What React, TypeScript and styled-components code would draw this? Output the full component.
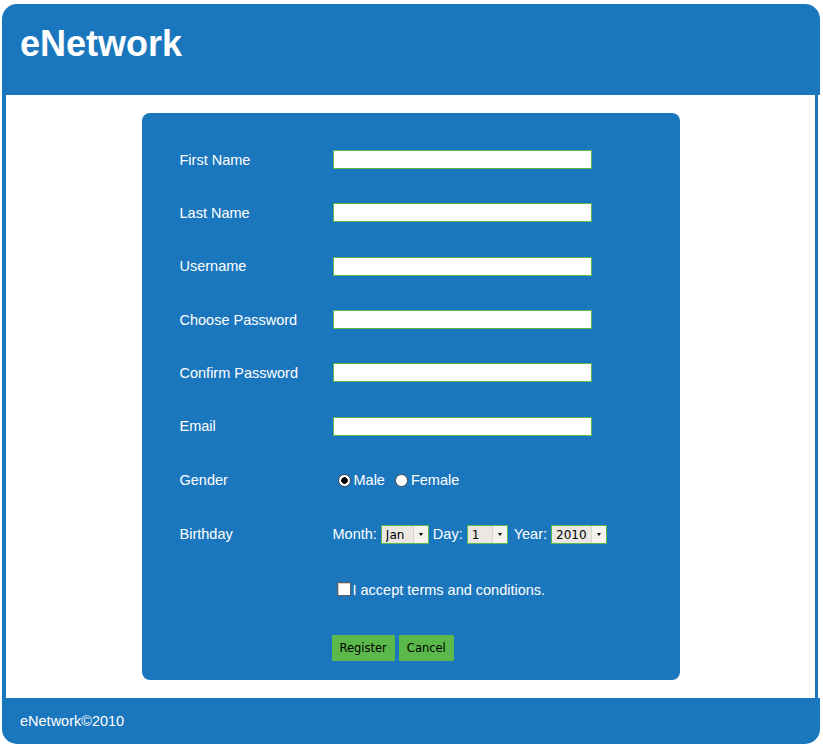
import styled, { createGlobalStyle } from 'styled-components'
import { useState } from 'react'

const BLUE = '#1b77bd'
const GREEN = '#5ab94a'

const GlobalStyle = createGlobalStyle`
	html, body {
		margin: 0;
		padding: 0;
		background: #ffffff;
	}
	body {
		font-family: "Liberation Sans", Arial, sans-serif;
	}
`

const months = ['Jan', 'Feb', 'Mar', 'Apr', 'May', 'Jun', 'Jul', 'Aug', 'Sep', 'Oct', 'Nov', 'Dec']
const days = Array.from({ length: 31 }, (_, i) => String(i + 1))
const years = Array.from({ length: 111 }, (_, i) => String(2010 - i))

const textRows = [
	{ label: 'First Name', type: 'text', height: 53 },
	{ label: 'Last Name', type: 'text', height: 53 },
	{ label: 'Username', type: 'text', height: 54 },
	{ label: 'Choose Password', type: 'password', height: 53 },
	{ label: 'Confirm Password', type: 'password', height: 53 },
	{ label: 'Email', type: 'text', height: 54 },
]

const DropDown = ({ value, options, width, onChange }: { value: string, options: string[], width: number, onChange: (v: string) => void }) => (
	<SelectWrap $width={width}>
		<Select value={value} onChange={event => onChange(event.target.value)}>
			{options.map(option => <option key={option}>{option}</option>)}
		</Select>
		<Arrow />
	</SelectWrap>
)

export default function App() {
	const [gender, setGender] = useState('male')
	const [month, setMonth] = useState('Jan')
	const [day, setDay] = useState('1')
	const [year, setYear] = useState('2010')
	const [accepted, setAccepted] = useState(false)

	return (
		<Page>
			<GlobalStyle />
			<Header>
				<Title>{'eNetwork'}</Title>
			</Header>
			<Content>
				<FormPanel>
					{textRows.map(row => (
						<Row key={row.label} $height={row.height}>
							<Label>{row.label}</Label>
							<TextInput type={row.type} />
						</Row>
					))}
					<Row $height={54}>
						<Label>{'Gender'}</Label>
						<Inline>
							<Radio type='radio' name='gender' checked={gender === 'male'} onChange={() => setGender('male')} />
							<span>{'Male'}</span>
							<Radio type='radio' name='gender' $spaced checked={gender === 'female'} onChange={() => setGender('female')} />
							<span>{'Female'}</span>
						</Inline>
					</Row>
					<Row $height={54}>
						<Label>{'Birthday'}</Label>
						<Inline $gap={4}>
							<span>{'Month:'}</span>
							<DropDown value={month} options={months} width={48} onChange={setMonth} />
							<span>{'Day:'}</span>
							<DropDown value={day} options={days} width={41} onChange={setDay} />
							<Spaced>{'Year:'}</Spaced>
							<DropDown value={year} options={years} width={56} onChange={setYear} />
						</Inline>
					</Row>
					<Row $height={57}>
						<span />
						<Inline>
							<Check type='checkbox' checked={accepted} onChange={() => setAccepted(!accepted)} />
							<span>{'I accept terms and conditions.'}</span>
						</Inline>
					</Row>
					<Row $height={60}>
						<span />
						<Buttons>
							<Button onClick={() => alert('Ok!')}>{'Register'}</Button>
							<Button>{'Cancel'}</Button>
						</Buttons>
					</Row>
				</FormPanel>
			</Content>
			<Footer>{'eNetwork\u00a92010'}</Footer>
		</Page>
	)
}

const Page = styled.div`
	width: 818px;
	margin: 4px 0 0 2px;
	display: flex;
	flex-direction: column;
`

const Header = styled.div`
	height: 91px;
	background-color: ${BLUE};
	border-radius: 15px 15px 0 0;
	padding: 19px 0 0 18px;
	box-sizing: border-box;
`

const Title = styled.h1`
	margin: 0;
	color: #ffffff;
	font-family: "Liberation Sans", Arial, sans-serif;
	font-weight: 700;
	font-size: 36px;
	line-height: 42px;
`

const Content = styled.div`
	width: 816px;
	height: 603px;
	box-sizing: border-box;
	background-color: #ffffff;
	border-left: 4px solid ${BLUE};
	border-right: 3px solid ${BLUE};
	padding-top: 18px;
	display: flex;
	justify-content: center;
	align-items: flex-start;
`

const FormPanel = styled.div`
	width: 538px;
	height: 567px;
	box-sizing: border-box;
	background-color: ${BLUE};
	border-radius: 8px;
	padding: 20px 0 0 38px;
	display: flex;
	flex-direction: column;
	color: #ffffff;
	font-size: 14.5px;
`

const Row = styled.div<{ $height: number }>`
	height: ${p => p.$height}px;
	display: grid;
	grid-template-columns: 153px 1fr;
	align-items: center;
`

const Label = styled.span`
	color: #ffffff;
`

const TextInput = styled.input`
	width: 259px;
	height: 19px;
	box-sizing: border-box;
	border: 1px solid ${GREEN};
	background: #ffffff;
	padding: 0 3px;
	font-size: 12px;
	outline: none;
	margin: 0;
`

const Inline = styled.div<{ $gap?: number }>`
	display: flex;
	align-items: center;
	gap: ${p => p.$gap || 0}px;
	white-space: nowrap;
`

const Spaced = styled.span`
	margin-left: 2px;
`

const Radio = styled.input<{ $spaced?: boolean }>`
	appearance: none;
	width: 13px;
	height: 13px;
	margin: 0 3px 0 ${p => (p.$spaced ? 10 : 5)}px;
	border: 1px solid #4a4a4a;
	border-radius: 50%;
	background: #ffffff;
	box-sizing: border-box;

	&:checked {
		background: radial-gradient(circle, #000000 0 3px, #ffffff 3.5px);
	}
`

const Check = styled.input`
	appearance: none;
	width: 14px;
	height: 14px;
	margin: 0 2px 0 4px;
	border: 1px solid #5c5c5c;
	background: #ffffff;
	box-shadow: inset 1px 1px 0 #d0d0d0;
	box-sizing: border-box;
	position: relative;
	top: -1px;

	&:checked::after {
		content: '✓';
		position: absolute;
		left: 1px;
		top: -3px;
		font-size: 12px;
		color: #000000;
	}
`

const SelectWrap = styled.div<{ $width: number }>`
	position: relative;
	width: ${p => p.$width}px;
	height: 19px;
	box-sizing: border-box;
	border: 1px solid ${GREEN};
	background: #ebe8e3;
`

const Select = styled.select`
	appearance: none;
	width: 100%;
	height: 100%;
	border: none;
	background: transparent;
	padding: 0 0 0 4px;
	margin: 0;
	font-family: "DejaVu Sans", sans-serif;
	font-size: 12px;
	color: #000000;
	outline: none;
`

const Arrow = styled.span`
	position: absolute;
	right: 0;
	top: 0;
	width: 14px;
	height: 17px;
	background: #f4f2ef;
	border-left: 1px solid #d8d5cf;
	pointer-events: none;

	&::after {
		content: '';
		position: absolute;
		left: 5px;
		top: 7px;
		border-left: 2px solid transparent;
		border-right: 2px solid transparent;
		border-top: 3px solid #000000;
	}
`

const Buttons = styled.div`
	display: flex;
	gap: 4px;
	margin-left: -1px;
`

const Button = styled.button`
	height: 26px;
	padding: 0 8px;
	border: none;
	border-radius: 1px;
	background-color: ${GREEN};
	color: #000000;
	font-family: "DejaVu Sans", sans-serif;
	font-size: 11.5px;
	cursor: pointer;
`

const Footer = styled.div`
	height: 46px;
	display: flex;
	align-items: center;
	padding-left: 18px;
	background-color: ${BLUE};
	border-radius: 0 0 15px 15px;
	color: #ffffff;
	font-size: 14.5px;
`
